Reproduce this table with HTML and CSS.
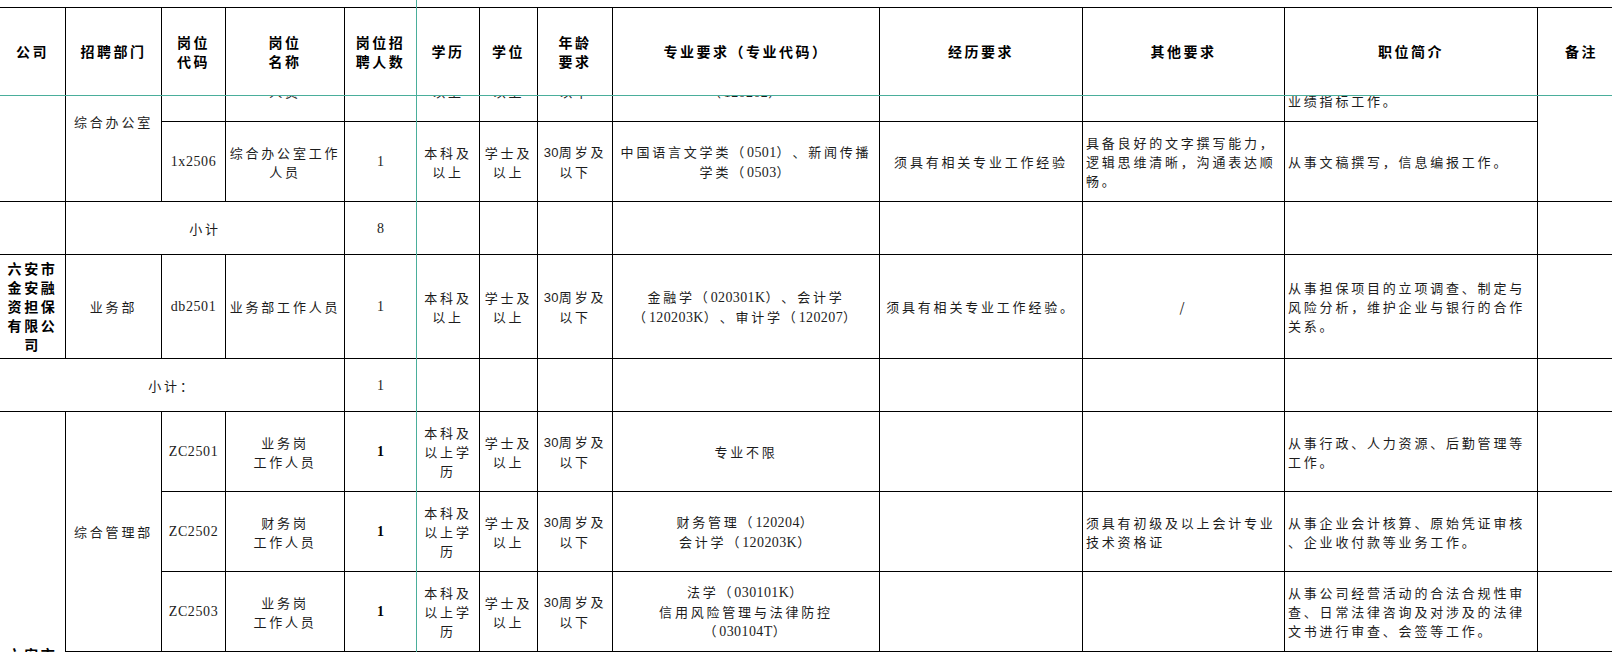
FILE: index.html
```html
<!DOCTYPE html>
<html lang="zh-CN">
<head>
<meta charset="utf-8">
<title>招聘岗位表</title>
<link rel="stylesheet" href="styles.css">
</head>
<body>
<div class="sheet">
  <div class="grid head">
    <div class="c">公司</div>
    <div class="c">招聘部门</div>
    <div class="c">岗位<br>代码</div>
    <div class="c">岗位<br>名称</div>
    <div class="c">岗位招<br>聘人数</div>
    <div class="c">学历</div>
    <div class="c">学位</div>
    <div class="c">年龄<br>要求</div>
    <div class="c">专业要求（专业代码）</div>
    <div class="c">经历要求</div>
    <div class="c">其他要求</div>
    <div class="c">职位简介</div>
    <div class="c">备注</div>
  </div>
  <div class="pane">
    <div class="grid body">
      <!-- R0 (partly scrolled out) -->
      <div class="c rs2 co"></div>
      <div class="c rs2">综合办公室</div>
      <div class="c code">1x2505</div>
      <div class="c"><p class="t">综合办公室工作<br>人员</p></div>
      <div class="c num">1</div>
      <div class="c"><p class="t">本科及<br>以上</p></div>
      <div class="c"><p class="t">学士及<br>以上</p></div>
      <div class="c"><p class="t"><span class="s">30</span>周岁及<br>以下</p></div>
      <div class="c"><p class="t">工商管理类（<span class="n">1202</span>）、市场营销<br>（<span class="n">120202</span>）</p></div>
      <div class="c">须具有相关专业工作经验</div>
      <div class="c l"></div>
      <div class="c l"><p class="t">从事市场开拓、客户维护等工作，<br>协助部门负责人完成公司下达的<br>业绩指标工作。</p></div>
      <div class="c rs2"></div>
      <!-- R1 -->
      <div class="c code">1x2506</div>
      <div class="c"><p class="t">综合办公室工作<br>人员</p></div>
      <div class="c num">1</div>
      <div class="c"><p class="t">本科及<br>以上</p></div>
      <div class="c"><p class="t">学士及<br>以上</p></div>
      <div class="c"><p class="t"><span class="s">30</span>周岁及<br>以下</p></div>
      <div class="c"><p class="t">中国语言文学类（<span class="n">0501</span>）、新闻传播<br>学类（<span class="n">0503</span>）</p></div>
      <div class="c">须具有相关专业工作经验</div>
      <div class="c l"><p class="t">具备良好的文字撰写能力，<br>逻辑思维清晰，沟通表达顺<br>畅。</p></div>
      <div class="c l">从事文稿撰写，信息编报工作。</div>
      <!-- R2 subtotal -->
      <div class="c"></div>
      <div class="c cs3">小计</div>
      <div class="c num">8</div>
      <div class="c"></div><div class="c"></div><div class="c"></div><div class="c"></div>
      <div class="c"></div><div class="c"></div><div class="c"></div><div class="c"></div>
      <!-- R3 -->
      <div class="c co"><p class="t">六安市<br>金安融<br>资担保<br>有限公<br>司</p></div>
      <div class="c">业务部</div>
      <div class="c code">db2501</div>
      <div class="c">业务部工作人员</div>
      <div class="c num">1</div>
      <div class="c"><p class="t">本科及<br>以上</p></div>
      <div class="c"><p class="t">学士及<br>以上</p></div>
      <div class="c"><p class="t"><span class="s">30</span>周岁及<br>以下</p></div>
      <div class="c"><p class="t">金融学（<span class="n">020301K</span>）、会计学<br>（<span class="n">120203K</span>）、审计学（<span class="n">120207</span>）</p></div>
      <div class="c">须具有相关专业工作经验。</div>
      <div class="c">/</div>
      <div class="c l"><p class="t">从事担保项目的立项调查、制定与<br>风险分析，维护企业与银行的合作<br>关系。</p></div>
      <div class="c"></div>
      <!-- R4 subtotal -->
      <div class="c cs4">小计：</div>
      <div class="c num">1</div>
      <div class="c"></div><div class="c"></div><div class="c"></div><div class="c"></div>
      <div class="c"></div><div class="c"></div><div class="c"></div><div class="c"></div>
      <!-- R5 -->
      <div class="c rs4 co"><p class="t">六安市<br>金安区<br>国有资<br>产有限<br>公司</p></div>
      <div class="c rs3">综合管理部</div>
      <div class="c code">ZC2501</div>
      <div class="c"><p class="t">业务岗<br>工作人员</p></div>
      <div class="c num b">1</div>
      <div class="c"><p class="t">本科及<br>以上学<br>历</p></div>
      <div class="c"><p class="t">学士及<br>以上</p></div>
      <div class="c"><p class="t"><span class="s">30</span>周岁及<br>以下</p></div>
      <div class="c">专业不限</div>
      <div class="c"></div>
      <div class="c l"></div>
      <div class="c l"><p class="t">从事行政、人力资源、后勤管理等<br>工作。</p></div>
      <div class="c"></div>
      <!-- R6 -->
      <div class="c code">ZC2502</div>
      <div class="c"><p class="t">财务岗<br>工作人员</p></div>
      <div class="c num b">1</div>
      <div class="c"><p class="t">本科及<br>以上学<br>历</p></div>
      <div class="c"><p class="t">学士及<br>以上</p></div>
      <div class="c"><p class="t"><span class="s">30</span>周岁及<br>以下</p></div>
      <div class="c"><p class="t">财务管理（<span class="n">120204</span>）<br>会计学（<span class="n">120203K</span>）</p></div>
      <div class="c"></div>
      <div class="c l"><p class="t">须具有初级及以上会计专业<br>技术资格证</p></div>
      <div class="c l"><p class="t">从事企业会计核算、原始凭证审核<br>、企业收付款等业务工作。</p></div>
      <div class="c"></div>
      <!-- R7 -->
      <div class="c code">ZC2503</div>
      <div class="c"><p class="t">业务岗<br>工作人员</p></div>
      <div class="c num b">1</div>
      <div class="c"><p class="t">本科及<br>以上学<br>历</p></div>
      <div class="c"><p class="t">学士及<br>以上</p></div>
      <div class="c"><p class="t"><span class="s">30</span>周岁及<br>以下</p></div>
      <div class="c"><p class="t">法学（<span class="n">030101K</span>）<br>信用风险管理与法律防控<br>（<span class="n">030104T</span>）</p></div>
      <div class="c"></div>
      <div class="c l"></div>
      <div class="c l"><p class="t">从事公司经营活动的合法合规性审<br>查、日常法律咨询及对涉及的法律<br>文书进行审查、会签等工作。</p></div>
      <div class="c"></div>
      <!-- R8 rows below the window -->
      <div class="c cs12"></div>
    </div>
  </div>
  <div class="freeze-h"></div>
  <div class="freeze-v"></div>
</div>
</body>
</html>
```
FILE: styles.css
```css
html, body {
  margin: 0;
  padding: 0;
  overflow: hidden;
  background: #fff;
}
.sheet {
  position: relative;
  width: 1612px;
  height: 652px;
  overflow: hidden;
  background: #fff;
  font-family: "Noto Sans CJK SC", sans-serif;
  color: #1c1c1c;
  text-spacing-trim: space-all;
}
.grid {
  display: grid;
  grid-template-columns: 65px 95px 63px 118px 71px 62px 57px 74px 266px 202px 201px 252px 87px;
  gap: 1px;
  background: #000;
  width: 1625px;
}
.c {
  background: #fff;
  display: flex;
  align-items: center;
  justify-content: center;
  text-align: center;
  padding: 0 2px;
  font-size: 13px;
  line-height: 19px;
  letter-spacing: 2.8px;
  overflow: hidden;
  min-width: 0;
}
.t {
  margin: 0;
}
.head {
  margin-top: 7px;
  border-top: 1px solid #000;
  padding-bottom: 1px;
  grid-template-rows: 87px;
}
.head .c {
  font-size: 14px;
  font-weight: 700;
  letter-spacing: 2.5px;
  color: #000;
}
.pane {
  height: 556px;
  overflow: hidden;
}
.body {
  margin-top: -54px;
  grid-template-rows: 79px 79px 52px 103px 52px 79px 79px 79px 320px;
}
.l {
  justify-content: flex-start;
  text-align: left;
  padding-left: 3px;
}
.co {
  font-size: 14px;
  font-weight: 700;
  letter-spacing: 2.6px;
  color: #000;
}
.code {
  font-family: "Liberation Serif", "Noto Sans CJK SC", serif;
  font-size: 14px;
  letter-spacing: 0.6px;
}
.num {
  font-family: "Liberation Serif", serif;
  font-size: 14px;
  letter-spacing: 0;
}
.b {
  font-weight: 700;
  color: #000;
}
.n {
  font-family: "Liberation Serif", serif;
  font-size: 14px;
  letter-spacing: 0.4px;
}
.s {
  font-family: "Liberation Sans", sans-serif;
  font-size: 13px;
  letter-spacing: 0.3px;
}
.rs2 { grid-row: span 2; }
.rs3 { grid-row: span 3; }
.rs4 { grid-row: span 4; }
.cs3 { grid-column: span 3; }
.cs4 { grid-column: span 4; }
.cs12 { grid-column: span 12; }
.freeze-h {
  position: absolute;
  left: 0;
  right: 0;
  top: 95px;
  height: 1px;
  background: #4aae9b;
}
.freeze-v {
  position: absolute;
  top: 0;
  bottom: 0;
  left: 416px;
  width: 1px;
  background: #4aae9b;
}
```
